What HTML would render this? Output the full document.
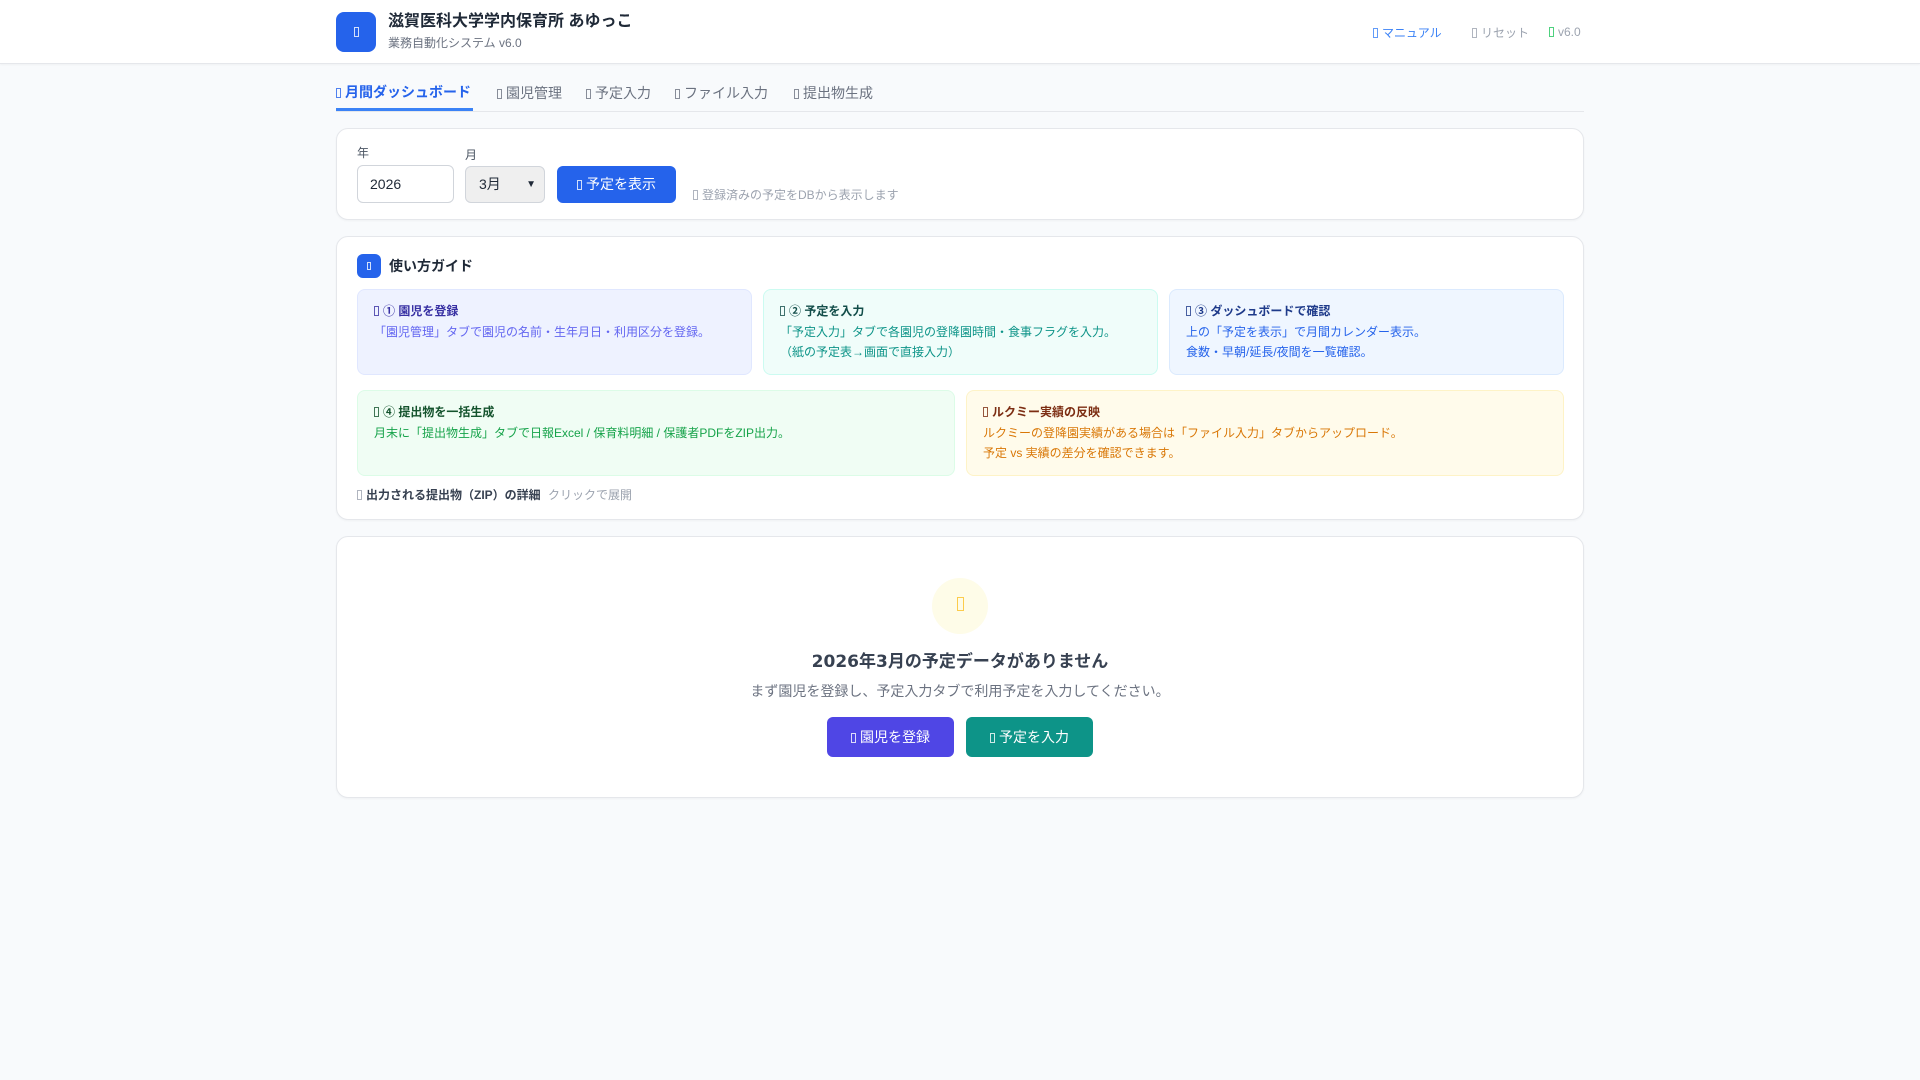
<!DOCTYPE html>
<html><head><meta charset="utf-8"><style>
*{box-sizing:border-box;margin:0;padding:0}
body{width:1920px;height:1080px;background:#f8fafc;font-family:"Liberation Sans","Noto Sans CJK JP",sans-serif;color:#1f2937;position:relative;overflow:hidden}
.a{position:absolute}
.ic{display:inline-block;width:5px;height:10px;border:1px solid currentColor;margin-right:4px;vertical-align:-1px;opacity:.8}
header{position:absolute;left:0;top:0;width:1920px;height:64px;background:#fff;border-bottom:1px solid #e5e7eb;box-shadow:0 1px 2px rgba(0,0,0,.04)}
.card{position:absolute;left:336px;width:1248px;background:#fff;border:1px solid #e5e7eb;border-radius:12px;box-shadow:0 1px 2px rgba(0,0,0,.04)}
.step{position:absolute;border-radius:8px;border:1px solid;padding:11px 16px;font-size:12px;line-height:20px}
.step b{display:block;font-size:12px;margin-bottom:1px}
.btn{position:absolute;color:#fff;border-radius:6px;font-size:14px;text-align:center}
</style></head><body>
<header>
<div class="a" style="left:336px;top:12px;width:40px;height:40px;background:#2563eb;border-radius:8px;color:#fff;text-align:center;line-height:40px"><span class="ic" style="margin:0"></span></div>
<div class="a" style="left:388px;top:11px;font-size:16px;font-weight:bold;color:#1f2937;line-height:22px">滋賀医科大学学内保育所 あゆっこ</div>
<div class="a" style="left:388px;top:35px;font-size:12px;color:#6b7280;line-height:16px">業務自動化システム v6.0</div>
<div class="a" style="left:1373px;top:24px;font-size:12px;color:#3b82f6"><span class="ic"></span>マニュアル</div>
<div class="a" style="left:1472px;top:24px;font-size:12px;color:#9ca3af"><span class="ic"></span>リセット</div>
<div class="a" style="left:1549px;top:24px;font-size:12px;color:#9ca3af;line-height:16px"><span class="ic" style="color:#22c55e"></span>v6.0</div>
</header>
<div class="a" style="left:336px;top:111px;width:1248px;height:1px;background:#e5e7eb"></div>
<div class="a" style="left:336px;top:82px;font-size:14px;font-weight:bold;color:#2563eb"><span class="ic"></span>月間ダッシュボード</div>
<div class="a" style="left:336px;top:108px;width:137px;height:3px;background:#3b82f6"></div>
<div class="a" style="left:497px;top:83px;font-size:14px;color:#6b7280"><span class="ic"></span>園児管理</div>
<div class="a" style="left:586px;top:83px;font-size:14px;color:#6b7280"><span class="ic"></span>予定入力</div>
<div class="a" style="left:675px;top:83px;font-size:14px;color:#6b7280"><span class="ic"></span>ファイル入力</div>
<div class="a" style="left:794px;top:83px;font-size:14px;color:#6b7280"><span class="ic"></span>提出物生成</div>

<div class="card" style="top:128px;height:92px">
<div class="a" style="left:20px;top:15px;font-size:12px;color:#4b5563">年</div>
<div class="a" style="left:20px;top:36px;width:97px;height:38px;border:1px solid #d1d5db;border-radius:6px;font-size:14px;line-height:36px;padding-left:12px">2026</div>
<div class="a" style="left:128px;top:17px;font-size:12px;color:#4b5563">月</div>
<div class="a" style="left:128px;top:37px;width:80px;height:37px;border:1px solid #d1d5db;border-radius:6px;background:#efefef;font-size:14px;line-height:35px;padding-left:13px">3月<span style="position:absolute;right:8px;font-size:10px">&#9660;</span></div>
<div class="btn" style="left:220px;top:37px;width:119px;height:37px;line-height:37px;background:#2563eb"><span class="ic"></span>予定を表示</div>
<div class="a" style="left:356px;top:57px;font-size:12px;color:#9ca3af"><span class="ic"></span>登録済みの予定をDBから表示します</div>
</div>

<div class="card" style="top:236px;height:284px">
<div class="a" style="left:20px;top:17px;width:24px;height:24px;background:#2563eb;border-radius:6px;color:#fff;text-align:center;line-height:22px"><span class="ic" style="margin:0;height:8px;width:4px"></span></div>
<div class="a" style="left:52px;top:19px;font-size:14px;font-weight:bold;color:#1f2937">使い方ガイド</div>
<div class="step" style="left:20px;top:52px;width:395px;height:86px;background:#eef2ff;border-color:#e0e7ff;color:#6366f1"><b style="color:#3730a3"><span class="ic"></span>① 園児を登録</b>「園児管理」タブで園児の名前・生年月日・利用区分を登録。</div>
<div class="step" style="left:426px;top:52px;width:395px;height:86px;background:#f0fdfa;border-color:#ccfbf1;color:#0d9488"><b style="color:#134e4a"><span class="ic"></span>② 予定を入力</b>「予定入力」タブで各園児の登降園時間・食事フラグを入力。<br>（紙の予定表→画面で直接入力）</div>
<div class="step" style="left:832px;top:52px;width:395px;height:86px;background:#eff6ff;border-color:#dbeafe;color:#2563eb"><b style="color:#1e3a8a"><span class="ic"></span>③ ダッシュボードで確認</b>上の「予定を表示」で月間カレンダー表示。<br>食数・早朝/延長/夜間を一覧確認。</div>
<div class="step" style="left:20px;top:153px;width:598px;height:86px;background:#f0fdf4;border-color:#dcfce7;color:#16a34a"><b style="color:#14532d"><span class="ic"></span>④ 提出物を一括生成</b>月末に「提出物生成」タブで日報Excel / 保育料明細 / 保護者PDFをZIP出力。</div>
<div class="step" style="left:629px;top:153px;width:598px;height:86px;background:#fffbeb;border-color:#fef3c7;color:#d97706"><b style="color:#7c2d12"><span class="ic"></span>ルクミー実績の反映</b>ルクミーの登降園実績がある場合は「ファイル入力」タブからアップロード。<br>予定 vs 実績の差分を確認できます。</div>
<div class="a" style="left:20px;top:249px;font-size:12px;color:#374151"><span class="ic" style="color:#9ca3af"></span><b>出力される提出物（ZIP）の詳細</b> <span style="color:#9ca3af;margin-left:4px">クリックで展開</span></div>
</div>

<div class="card" style="top:536px;height:262px">
<div class="a" style="left:595px;top:41px;width:56px;height:56px;border-radius:50%;background:#fefce8;color:#fbbf24;text-align:center;line-height:56px"><span class="ic" style="margin:0;width:7px;height:14px"></span></div>
<div class="a" style="left:0;width:1246px;top:110px;text-align:center;font-size:17px;font-weight:bold;color:#374151;font-family:'DejaVu Sans','Noto Sans CJK JP',sans-serif">2026年3月の予定データがありません</div>
<div class="a" style="left:0;width:1246px;top:144px;text-align:center;font-size:14px;color:#6b7280;font-family:'DejaVu Sans','Noto Sans CJK JP',sans-serif">まず園児を登録し、予定入力タブで利用予定を入力してください。</div>
<div class="btn" style="left:490px;top:180px;width:127px;height:40px;line-height:40px;background:#4f46e5"><span class="ic"></span>園児を登録</div>
<div class="btn" style="left:629px;top:180px;width:127px;height:40px;line-height:40px;background:#0d9488"><span class="ic"></span>予定を入力</div>
</div>
</body></html>
